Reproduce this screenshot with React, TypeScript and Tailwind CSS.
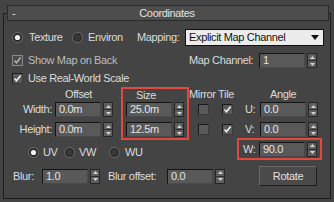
import React from "react";

function Spinner() {
  return (
    <div className="w-[10px] h-[15px] flex flex-col border border-[#262626] bg-[#5e5e5e] shrink-0">
      <div className="flex-1 flex items-center justify-center border-b border-[#2e2e2e]">
        <svg width="5" height="3" viewBox="0 0 5 3">
          <path d="M2.5 0L5 3H0z" fill="#d4d4d4" />
        </svg>
      </div>
      <div className="flex-1 flex items-center justify-center">
        <svg width="5" height="3" viewBox="0 0 5 3">
          <path d="M0 0H5L2.5 3z" fill="#d4d4d4" />
        </svg>
      </div>
    </div>
  );
}

function NumField({ value }: { value: string }) {
  return (
    <div className="flex items-center gap-[2px]">
      <div className="w-[46px] h-[15px] flex items-center pl-[3px] bg-[#595959] border border-t-[#141414] border-l-[#141414] border-r-[#4a4a4a] border-b-[#4a4a4a] text-[#e4e4e4] leading-none">
        {value}
      </div>
      <Spinner />
    </div>
  );
}

function Check({ on, dim }: { on?: boolean; dim?: boolean }) {
  return (
    <div
      className={
        dim
          ? "w-[11px] h-[11px] shrink-0 flex items-center justify-center bg-[#4a4a4a] border border-[#8a8a8a]"
          : "w-[11px] h-[11px] shrink-0 flex items-center justify-center bg-[#5a5a5a] border border-t-[#1a1a1a] border-l-[#1a1a1a] border-r-[#3a3a3a] border-b-[#3a3a3a]"
      }
    >
      {on && (
        <svg width="9" height="9" viewBox="0 0 9 9">
          <path d="M1.5 4.5L3.5 6.8L7.6 1.6" stroke={dim ? "#b0b0b0" : "#f0f0f0"} strokeWidth="1.6" fill="none" />
        </svg>
      )}
    </div>
  );
}

function Radio({ on }: { on?: boolean }) {
  return (
    <svg width="11" height="11" viewBox="0 0 11 11" className="shrink-0">
      <circle cx="5.5" cy="5.5" r="5" fill="#2c2c2c" stroke="#6e6e6e" strokeWidth="1" />
      {on ? <circle cx="5.5" cy="5.5" r="2.6" fill="#f2f2f2" /> : <circle cx="5.5" cy="5.5" r="3" fill="#383838" />}
    </svg>
  );
}

export default function App() {
  return (
    <div className="w-[334px] h-[202px] bg-[#444444] overflow-hidden pt-[13px] pl-[3px] font-['Liberation_Sans',Arial,sans-serif] text-[11px] tracking-[-0.35px] text-[#dcdcdc] leading-none">
      <div className="w-[328px] h-[186px] border border-[#1c1c1c]">
        {/* rollout header */}
        <div className="-mt-[9px] ml-[3px] w-[322px] h-[16px] grid grid-cols-[20px_1fr_20px] items-center bg-[#4d4d4d] border border-[#2a2a2a] text-[#e2e2e2]">
          <span className="pl-[4px]">-</span>
          <span className="text-center pr-[2px]">Coordinates</span>
          <span />
        </div>

        {/* texture / environ / mapping */}
        <div className="mt-[8px] h-[17px] flex items-center">
          <div className="ml-[8px]">
            <Radio on />
          </div>
          <span className="ml-[6px] w-[43px]">Texture</span>
          <Radio />
          <span className="ml-[5px] w-[49px]">Environ</span>
          <span className="w-[48px]">Mapping:</span>
          <div className="w-[139px] h-[17px] flex items-center justify-between pl-[3px] pr-[4px] bg-[#ececec] border border-[#101010] text-[#111111]">
            <span>Explicit Map Channel</span>
            <svg width="8" height="5" viewBox="0 0 8 5">
              <path d="M0 0H8L4 5z" fill="#111111" />
            </svg>
          </div>
        </div>

        {/* show map on back / map channel */}
        <div className="mt-[8px] h-[13px] flex items-center">
          <div className="ml-[8px]">
            <Check on dim />
          </div>
          <span className="ml-[5px] w-[161px] text-[#bcbcbc]">Show Map on Back</span>
          <span className="w-[70px]">Map Channel:</span>
          <NumField value="1" />
        </div>

        <div className="mt-[5px] h-[13px] flex items-center">
          <div className="ml-[8px]">
            <Check on />
          </div>
          <span className="ml-[5px]">Use Real-World Scale</span>
        </div>

        {/* offset / size / mirror tile / angle */}
        <div className="mt-[2px] flex">
          <div className="flex flex-col">
            <div className="flex">
              <div className="w-[50px] flex flex-col">
                <div className="h-[15px]" />
                <div className="h-[15px] flex items-center justify-end pr-[2px]">Width:</div>
                <div className="mt-[5px] h-[15px] flex items-center justify-end pr-[2px]">Height:</div>
              </div>

              <div className="w-[67px] flex flex-col">
                <div className="h-[15px] flex items-center pl-[11px]">Offset</div>
                <div className="ml-[1px] h-[15px]">
                  <NumField value="0.0m" />
                </div>
                <div className="ml-[1px] mt-[5px] h-[15px]">
                  <NumField value="0.0m" />
                </div>
              </div>

              <div className="w-[68px] h-[53px] flex flex-col border-2 border-[#e4473e]">
                <div className="h-[13px] flex items-center pl-[13px]">Size</div>
                <div className="ml-[3px] h-[15px]">
                  <NumField value="25.0m" />
                </div>
                <div className="ml-[3px] mt-[5px] h-[15px]">
                  <NumField value="12.5m" />
                </div>
              </div>

              <div className="w-[48px] flex flex-col">
                <div className="h-[15px] flex items-center whitespace-nowrap">Mirror Tile</div>
                <div className="h-[15px] flex items-center">
                  <div className="ml-[9px]">
                    <Check />
                  </div>
                  <div className="ml-[13px]">
                    <Check on />
                  </div>
                </div>
                <div className="mt-[5px] h-[15px] flex items-center">
                  <div className="ml-[9px]">
                    <Check />
                  </div>
                  <div className="ml-[13px]">
                    <Check on />
                  </div>
                </div>
              </div>
            </div>

            <div className="mt-[6px] h-[12px] flex items-center">
              <div className="ml-[24px]">
                <Radio on />
              </div>
              <span className="ml-[4px] w-[21px]">UV</span>
              <Radio />
              <span className="ml-[4px] w-[30px]">VW</span>
              <Radio />
              <span className="ml-[5px]">WU</span>
            </div>
          </div>

          <div className="w-[86px] flex flex-col">
            <div className="h-[15px] flex items-center pl-[33px]">Angle</div>
            <div className="h-[15px] flex items-center pl-[8px]">
              <span className="w-[15px]">U:</span>
              <NumField value="0.0" />
            </div>
            <div className="mt-[5px] h-[15px] flex items-center pl-[8px]">
              <span className="w-[15px]">V:</span>
              <NumField value="0.0" />
            </div>
            <div className="mt-[1px] w-[85px] h-[22px] flex items-center pl-[4px] border-2 border-[#e4473e]">
              <span className="w-[16px]">W:</span>
              <NumField value="90.0" />
            </div>
          </div>
        </div>

        {/* blur / rotate */}
        <div className="mt-[6px] h-[20px] flex items-center">
          <span className="ml-[9px] w-[29px]">Blur:</span>
          <NumField value="1.0" />
          <span className="ml-[8px] w-[59px] whitespace-nowrap">Blur offset:</span>
          <NumField value="0.0" />
          <button className="ml-[34px] w-[58px] h-[20px] flex items-center justify-center bg-[#4a4a4a] border border-t-[#6a6a6a] border-l-[#6a6a6a] border-r-[#1e1e1e] border-b-[#1e1e1e] text-[#e0e0e0]">
            Rotate
          </button>
        </div>
      </div>
    </div>
  );
}
